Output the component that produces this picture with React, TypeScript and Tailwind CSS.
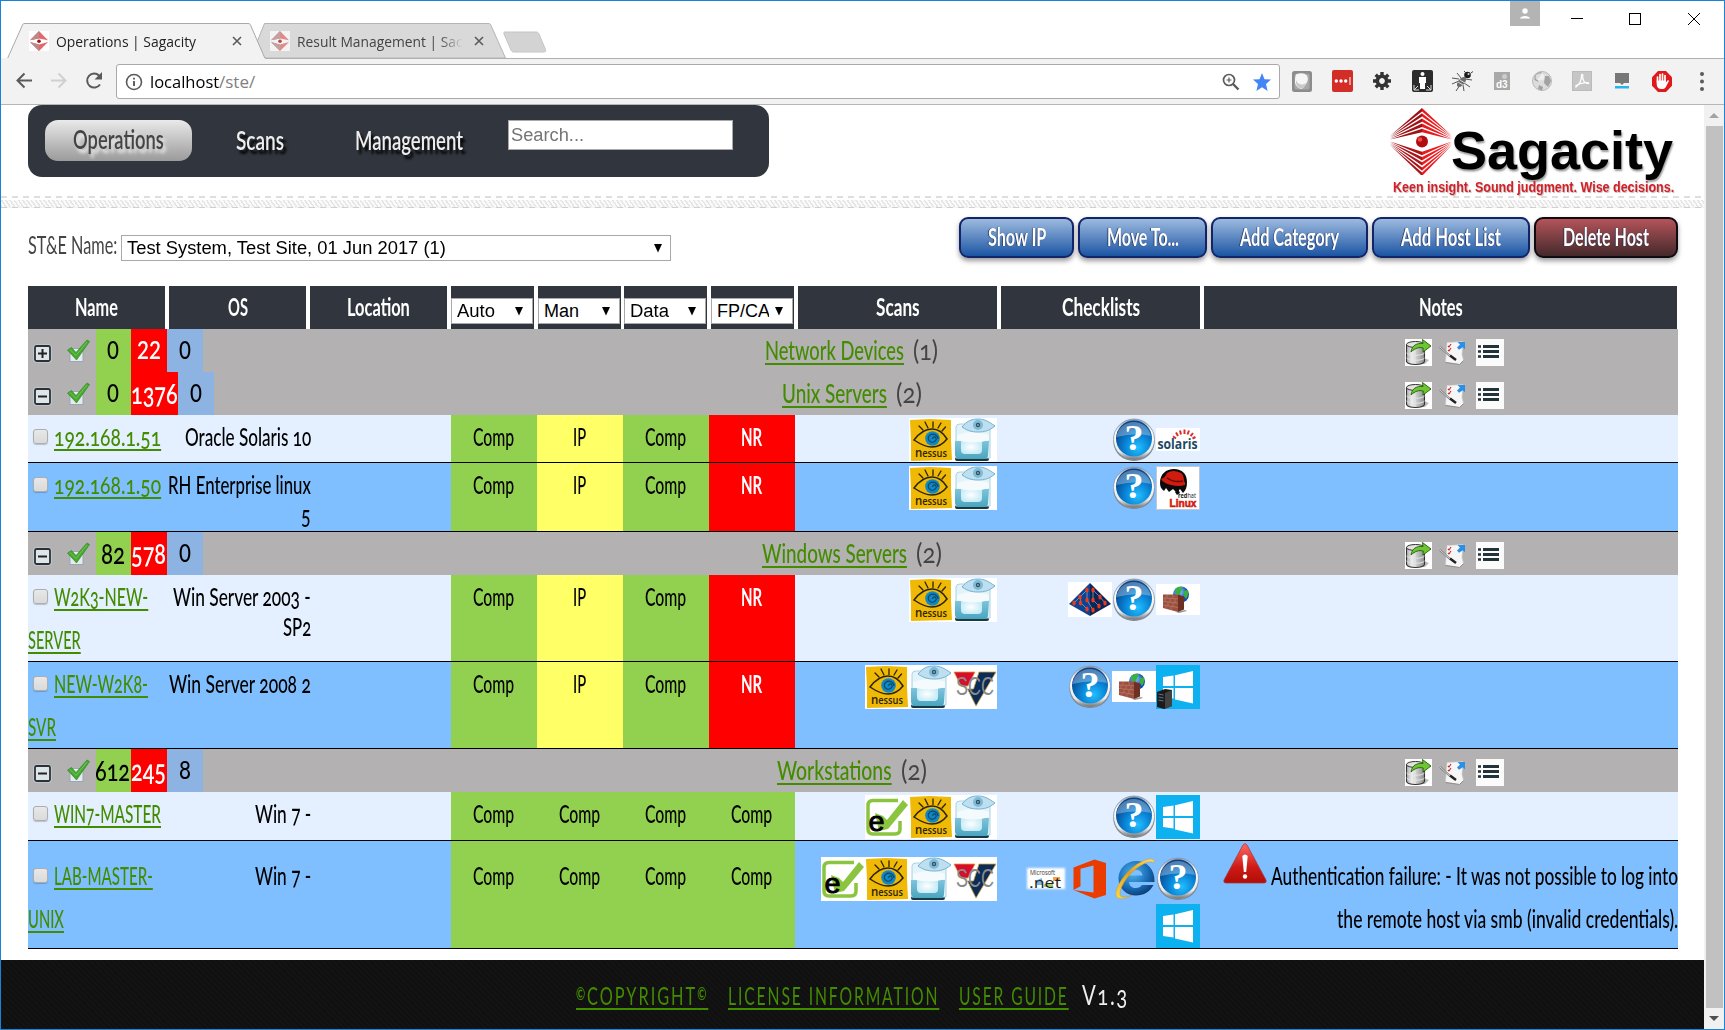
import { useLayoutEffect, useRef, useState } from "react";
import type { ReactNode } from "react";

/* Condensed text: squeezes its content horizontally to a given width. */
function Fit({ w, className = "", children }: { w: number; className?: string; children: ReactNode }) {
  const ref = useRef<HTMLSpanElement>(null);
  const [scale, setScale] = useState(1);
  useLayoutEffect(() => {
    if (ref.current) {
      const natural = ref.current.offsetWidth;
      if (natural) setScale(w / natural);
    }
  }, [w]);
  return (
    <span className="inline-block shrink-0 text-left whitespace-nowrap" style={{ width: w }}>
      <span ref={ref} className={`inline-block origin-left whitespace-pre ${className}`} style={{ transform: `scaleX(${scale})` }}>
        {children}
      </span>
    </span>
  );
}

const LINK = "text-[#438c00] underline decoration-2 underline-offset-[3px] [text-decoration-skip-ink:none]";

/* ---------- browser chrome ---------- */

function Diamond({ size, faded }: { size: number; faded?: boolean }) {
  return (
    <svg width={size} height={size} viewBox="0 0 20 20" className={faded ? "shrink-0 bg-white opacity-70" : "shrink-0 bg-white"}>
      <path d="M1 9.2 10 0l9 9.2L10 7.6z" fill="#e2696b" />
      <path d="M1 9.2 10 0v7.6z" fill="#b98a8a" />
      <path d="M1 11l9 9 9-9-9 2.4z" fill="#e2696b" />
      <path d="M1 11l9 9v-6.6z" fill="#b98a8a" />
      <circle cx="10" cy="10.2" r="1.8" fill="#a51216" />
    </svg>
  );
}

function CloseX() {
  return (
    <svg width="10" height="10" viewBox="0 0 10 10" stroke="#5a5a5a" strokeWidth="1.6">
      <path d="M1 1l8 8M9 1 1 9" />
    </svg>
  );
}

function TabStrip() {
  return (
    <div className="relative flex h-[57px] shrink-0 items-start bg-white">
      <svg width="560" height="57" viewBox="1 1 560 57" className="absolute left-0 top-0">
        <path d="M257 42 264.500 23.500H488c2 0 2.500.5 3 2L505.500 58H264z" fill="#d9d9d9" stroke="#b4b4b4" />
        <path d="M505 32h31c2 0 2.500 1 3 2l6.500 15.500c.6 1.500 0 2.500-1.500 2.500h-30c-2 0-2.500-1-3-2l-7-16c-.5-1.300 0-2 1-2z" fill="#d3d3d3" stroke="#c4c4c4" />
        <path d="M0 58.500H7.500L22.500 25c.6-1.200 1-1.500 2.500-1.500h223c1.500 0 2 .5 2.500 1.500L265 58.500" fill="#f2f2f2" stroke="#a9a9a9" />
      </svg>
      <div className="relative ml-7 mt-[28px] flex h-6 w-[220px] items-center">
        <Diamond size={20} />
        <Fit w={140} className="ml-[7px] font-['Open_Sans',sans-serif] text-[14px] leading-[22px] text-[#222]">Operations | Sagacity</Fit>
        <div className="ml-auto mr-[7px] pl-1"><CloseX /></div>
      </div>
      <div className="relative ml-[21px] mt-[28px] flex h-6 w-[220px] items-center">
        <Diamond size={20} faded />
        <span className="relative ml-[7px] block w-[166px] overflow-hidden">
          <Fit w={166} className="font-['Open_Sans',sans-serif] text-[14px] leading-[22px] text-[#444]">Result Management | Sac</Fit>
          <span className="absolute inset-y-0 right-0 w-6 bg-gradient-to-r from-transparent to-[#d9d9d9]" />
        </span>
        <div className="ml-auto mr-[6px]"><CloseX /></div>
      </div>
      <div className="ml-auto mr-[23px] flex">
        <div className="mr-[31px] flex h-[25px] w-[30px] justify-center bg-[#b4b4b4] pt-[7px]">
          <svg width="10" height="11" viewBox="0 0 10 11" fill="#fff"><circle cx="5" cy="3" r="2.700" /><path d="M0 10.500C0 7 10 7 10 10.500z" /></svg>
        </div>
        <svg width="130" height="25" viewBox="0 0 130 25" fill="none" stroke="#000" shapeRendering="crispEdges">
          <path d="M0 17.500h12" /><path d="M58.500 12.500h11v11h-11z" />
          <path d="M117 12l12 12M129 12l-12 12" shapeRendering="auto" />
        </svg>
      </div>
    </div>
  );
}

function Extensions() {
  const cell = "flex w-10 shrink-0 justify-center";
  return (
    <div className="ml-[2px] flex items-center">
      <div className={cell}><svg width="20" height="21" viewBox="0 0 20 21"><rect width="20" height="21" rx="2.500" fill="#8c8c8c" /><rect x="2.500" y="2.500" width="15" height="16" rx="2" fill="#a8a8a8" /><path d="M4 3.500q7-3 11 1 2 4-1 8.500-3 5-5 5-5-2-6-6-.5-5 1-8.500z" fill="#f6f6f6" /><path d="M4 9c2 6 8 5 10 3-2 5-4 6-6 5.500C5 16 3.500 13 4 9z" fill="#c9c9c9" /></svg></div>
      <div className={cell}><svg width="21" height="22" viewBox="0 0 21 22"><rect width="21" height="22" rx="2" fill="#d32d27" /><g fill="#fff"><circle cx="4.300" cy="11" r="1.700" /><circle cx="9" cy="11" r="1.700" /><circle cx="13.700" cy="11" r="1.700" /><path d="M17.500 7h1v8h-1z" /></g></svg></div>
      <div className={cell}><svg width="18" height="18" viewBox="-9 -9 18 18"><circle r="4.700" fill="none" stroke="#333" strokeWidth="3.600" /><path d="M0-9v3M0 6v3M-9 0h3M6 0h3M-6.300-6.300l2.200 2.200M4.100 4.100l2.200 2.200M6.300-6.300 4.100-4.100M-4.100 4.100l-2.200 2.200" stroke="#333" strokeWidth="3.400" /></svg></div>
      <div className={cell}><svg width="21" height="22" viewBox="0 0 21 22"><rect width="21" height="22" rx="2" fill="#2b2b2b" /><circle cx="10.500" cy="4" r="2" fill="#fff" /><path d="M7 7h7v6h-1v6H8v-6H7z" fill="#fff" /><path d="M2 15v5h5M2 20l4-4M19 15v5h-5M19 20l-4-4" stroke="#ddd" fill="none" /></svg></div>
      <div className={cell}><svg width="22" height="22" viewBox="0 0 22 22"><path d="M8 9 1 8M8 11l-7 3M9 15l-4 6M13 13l6 4M12 15l1 6M10 8 6 3M14 9l7 1" stroke="#555" strokeWidth="1" fill="none" /><ellipse cx="10.500" cy="12" rx="3.200" ry="6" transform="rotate(40 10.500 12)" fill="#6d6d6d" /><path d="M7 12l5 3M9 10l5 3" stroke="#ddd" /><circle cx="16.500" cy="5" r="3.300" fill="#1d1d1d" /><path d="M13 1l2 2M20 3l2-1.500" stroke="#444" /><circle cx="17.500" cy="4" r="1" fill="#ddd" /></svg></div>
      <div className={cell}><div className="relative h-[18px] w-4 bg-[#a9a9a9]"><span className="absolute bottom-0 left-[2px] font-['Liberation_Sans',sans-serif] text-[10px] font-bold leading-[10px] text-white">d3</span><span className="absolute right-[3px] top-[2px] size-[5px] rounded-full bg-[#ccc]" /></div></div>
      <div className={cell}><svg width="20" height="20" viewBox="0 0 20 20"><circle cx="10" cy="10" r="9.500" fill="#dcdcdc" stroke="#b9b9b9" /><path d="M2.500 5q3-4 7-4l-1 4-3 3 1 3-4-2zM13 5l4 0 2 5-3 6-4-4zM7 14l4 2-1 3.500-4-1.500z" fill="#a2a2a2" /><ellipse cx="8" cy="6" rx="4.500" ry="3.500" fill="#f6f6f6" opacity=".7" /></svg></div>
      <div className={cell}><svg width="20" height="20" viewBox="0 0 20 20"><rect width="20" height="20" fill="#bbb" /><rect x="1" y="1" width="18" height="18" fill="#c6c6c6" /><path d="M4 16c3-2 6-7 5.500-12 0-1 1.500-1 1.300.5C10 9 13 13 16.500 12.500 18 11 10 11 4 14.500z" stroke="#fff" fill="none" strokeWidth="1.200" /></svg></div>
      <div className={cell}><svg width="14" height="16" viewBox="0 0 14 16"><path d="M0 0h14v10H9l-2 2-2-2H0z" fill="#777" /><path d="M0 13h14v2.500H0z" fill="#28b4ea" /></svg></div>
      <div className={cell}><svg width="20" height="21" viewBox="0 0 20 21"><path d="M6 0h8l6 6.200v8.600L14 21H6l-6-6.200V6.200z" fill="#e0191b" /><path d="M5.500 11V6M8 10V3.500M10.500 10V3M13 10V4.500" stroke="#fff" strokeWidth="1.700" strokeLinecap="round" /><path d="M4.700 9.500h9.200v2l2-2.500 1.200.7-3 5.800c-1 2-2 2.500-4.500 2.500-3.300 0-4.900-2-4.900-5z" fill="#fff" /></svg></div>
      <div className={cell}><svg width="4" height="19" viewBox="0 0 4 19" fill="#5a5a5a"><circle cx="2" cy="2" r="2" /><circle cx="2" cy="9.500" r="2" /><circle cx="2" cy="17" r="2" /></svg></div>
    </div>
  );
}

function Toolbar() {
  return (
    <div className="relative flex h-[47px] shrink-0 items-center border-b border-[#b6b6b6] bg-[#f2f2f2]">
      <div className="absolute left-[264px] right-0 top-0 h-px bg-[#b0b0b0]" />
      <svg width="92" height="20" viewBox="0 0 92 20" className="ml-[14px]" fill="none" strokeWidth="2">
        <path d="M17 9.500H2.500M9.500 2.500l-7 7 7 7" stroke="#5a5a5a" />
        <path d="M36 9.500h14.500M43.500 2.500l7 7-7 7" stroke="#d0d0d0" />
        <path d="M85 13.500a7 7 0 1 1-.8-8.800" stroke="#5a5a5a" />
        <path d="M87 1v7.500H79.500z" fill="#5a5a5a" />
      </svg>
      <div className="ml-[9px] mt-[1px] flex h-[35px] w-[1164px] items-center rounded-[3px] border border-[#a9a9a9] bg-white">
        <svg width="18" height="18" viewBox="0 0 18 18" className="ml-[8px]" fill="none" stroke="#5a5a5a" strokeWidth="1.600"><circle cx="9" cy="9" r="7.500" /><path d="M9 8v5M9 4.800v1.700" strokeWidth="1.900" /></svg>
        <Fit w={69} className="ml-[7px] font-['Open_Sans',sans-serif] text-[17px] leading-8 text-black">localhost</Fit>
        <Fit w={36} className="ml-[7px] font-['Open_Sans',sans-serif] text-[17px] leading-8 text-[#808080]">/ste/</Fit>
        <svg width="18" height="18" viewBox="0 0 18 18" className="ml-auto" fill="none" stroke="#5a5a5a" strokeWidth="1.700"><circle cx="7" cy="7" r="5.500" /><path d="M11 11l5.500 5.500" strokeWidth="2.400" /><path d="M7 4.500v5M4.500 7h5" strokeWidth="1.200" /></svg>
        <svg width="18" height="18" viewBox="0 0 18 18" className="ml-[13px] mr-[8px]"><path d="M9 0l2.500 6.200 6.500.4-5 4.300L14.600 18 9 14.200 3.400 18 5 10.900 0 6.600l6.500-.4z" fill="#4285f4" /></svg>
      </div>
      <Extensions />
    </div>
  );
}

/* ---------- page header ---------- */

function SagacityMark() {
  const rays = [0, 1, 2, 3, 4];
  return (
    <svg width="64" height="68" viewBox="0 0 64 68" className="shrink-0">
      {rays.map((i) => (
        <g key={i}>
          <path d={`M32 ${1 + i * 5.2}L0 ${29 + i * 0.9}L32 ${4.4 + i * 5.2}z`} fill="#9c1216" />
          <path d={`M32 ${1 + i * 5.2}L62 ${29 + i * 0.9}L32 ${4.4 + i * 5.2}z`} fill="#e8191c" />
          <path d={`M32 ${69 - i * 5.2}L0 ${38 - i * 0.9}L32 ${65.6 - i * 5.2}z`} fill="#a81519" />
          <path d={`M32 ${69 - i * 5.2}L62 ${38 - i * 0.9}L32 ${65.6 - i * 5.2}z`} fill="#ea1c1f" />
        </g>
      ))}
      <circle cx="32" cy="34.500" r="6" fill="#b00d10" />
      <circle cx="30" cy="32.500" r="2.300" fill="#f0494c" />
    </svg>
  );
}

function Header() {
  const nav = "font-['Lato',sans-serif] text-[27px] font-semibold";
  return (
    <div className="flex h-[91px] items-start justify-between pl-[27px] pr-[29px]">
      <div className="flex h-[72px] w-[741px] items-start rounded-[14px] bg-[#31353d] pl-[17px] pt-[15px]">
        <div className="flex h-[41px] w-[147px] items-center justify-center rounded-[13px] bg-gradient-to-b from-[#eaeaea] to-[#9b9b9b] leading-[40px]">
          <Fit w={91} className={`${nav} font-medium text-[#444] [text-shadow:4px_4px_4px_#eee]`}>Operations</Fit>
        </div>
        <div className="ml-[44px] leading-[40px]"><Fit w={48} className={`${nav} text-[#eee] [text-shadow:4px_4px_3px_#000]`}>Scans</Fit></div>
        <div className="ml-[71px] leading-[40px]"><Fit w={108} className={`${nav} text-[#eee] [text-shadow:4px_4px_3px_#000]`}>Management</Fit></div>
        <div className="ml-[45px] h-[30px] w-[225px] border border-[#a9a9a9] bg-white pl-[2px] font-['Liberation_Sans',sans-serif] leading-[28px] text-[#757575]">
          <Fit w={73} className="text-[18px]">Search...</Fit>
        </div>
      </div>
      <div className="flex w-[285px] flex-col">
        <div className="flex h-[70px] items-start pt-[2px]">
          <SagacityMark />
          <div className="-ml-[3px] mt-[5px] leading-[76px]">
            <Fit w={222} className="font-['Liberation_Sans',sans-serif] text-[54px] font-bold text-black [text-shadow:1px_2px_2px_#0006]">Sagacity</Fit>
          </div>
        </div>
        <div className="ml-[3px] h-[18px] leading-[22px]">
          <Fit w={281} className="font-['Liberation_Sans',sans-serif] text-[14.500px] font-bold text-[#d41f26] [text-shadow:1px_1px_1px_#0004]">Keen insight. Sound judgment. Wise decisions.</Fit>
        </div>
      </div>
    </div>
  );
}

function Divider() {
  return (
    <div className="h-[12px]">
      <div className="h-[2px] bg-[repeating-linear-gradient(90deg,#dedede_0_6px,#fff_6px_11px)]" />
      <div className="mt-[2px] h-[7px] bg-[repeating-linear-gradient(55deg,#e6e6e6_0_1.500px,#fafafa_1.500px_3.500px)]" />
      <div className="h-px bg-[repeating-linear-gradient(90deg,#cfcfcf_0_6px,#f2f2f2_6px_11px)]" />
    </div>
  );
}

function Arrow() {
  return <svg width="8" height="9" viewBox="0 0 9 9" preserveAspectRatio="none" className="shrink-0"><path d="M0 0h9L4.500 8.500z" fill="#000" /></svg>;
}

function ActionButton({ label, w, tw, danger }: { label: string; w: number; tw: number; danger?: boolean }) {
  return (
    <div
      className={
        danger
          ? "flex h-[41px] items-center justify-center rounded-[9px] border-2 border-[#100a12] bg-gradient-to-b from-[#b5545a] to-[#45292b] shadow-[0_3px_5px_#0006] leading-[38px]"
          : "flex h-[41px] items-center justify-center rounded-[9px] border-2 border-[#12246a] bg-gradient-to-b from-[#9dbade] to-[#1955a3] shadow-[0_3px_5px_#0006] leading-[38px]"
      }
      style={{ width: w }}
    >
      <Fit w={tw} className="font-['Lato',sans-serif] text-[25px] font-bold text-white [text-shadow:-1px_0_1px_#1a2a50]">{label}</Fit>
    </div>
  );
}

function Controls() {
  return (
    <div className="flex h-[78px] items-start pl-[27px] pt-[9px]">
      <div className="mt-[6px] font-['Lato',sans-serif] leading-[42px]"><Fit w={89} className="text-[25px] text-[#444]">ST&amp;E Name:</Fit></div>
      <div className="ml-[4px] mt-[18px] flex h-[26px] w-[550px] items-center border border-[#a9a9a9] bg-white pl-[5px] pr-[8px] font-['Liberation_Sans',sans-serif] leading-[28px]">
        <Fit w={319} className="text-[18px] text-black">Test System, Test Site, 01 Jun 2017 (1)</Fit>
        <div className="ml-auto"><Arrow /></div>
      </div>
      <div className="ml-auto mr-[26px] flex gap-[4px]">
        <ActionButton label="Show IP" w={115} tw={58} />
        <ActionButton label="Move To..." w={129} tw={72} />
        <ActionButton label="Add Category" w={157} tw={99} />
        <ActionButton label="Add Host List" w={158} tw={100} />
        <ActionButton label="Delete Host" w={144} tw={86} danger />
      </div>
    </div>
  );
}

/* ---------- product icons ---------- */

function Nessus() {
  return (
    <svg width="44" height="44" viewBox="0 0 44 44" className="bg-white">
      <path d="M1 2l20-1 21 1v20l1 20-21 .5L2 43V23z" fill="#efb906" />
      <g fill="none" stroke="#2b2307" strokeLinecap="round">
        <path d="M5 22c6-8 13-11 18-11 7 0 12 5 15 10-4 5-9 8-15 8-7 0-12-3-18-7z" strokeWidth="1.500" />
        <path d="M14 12l-4-4M19 10l-3-6M24 9.500V4M29 10l3-5M33 13l3.500-4" strokeWidth="1.300" />
      </g>
      <circle cx="23.500" cy="20.500" r="7.300" fill="#0e87c6" />
      <path d="M24 21c-1-2 2-3 3-1s-2 5-5 4-4-5-1-7 8 0 8 4" fill="none" stroke="#10435f" strokeWidth="1.100" />
      <text x="6" y="38.500" textLength="32" lengthAdjust="spacingAndGlyphs" fontFamily="Open Sans" fontSize="10.500" fontWeight="600" fill="#2b2307"><tspan fontSize="13">n</tspan>essus</text>
    </svg>
  );
}

function EyeBox() {
  return (
    <svg width="44" height="44" viewBox="0 0 44 44" className="bg-white">
      <defs>
        <linearGradient id="boxBase" x1="0" y1="0" x2="0" y2="1"><stop offset="0" stopColor="#7fc4dc" /><stop offset="1" stopColor="#4aa5bf" /></linearGradient>
        <radialGradient id="boxGlow"><stop offset="0" stopColor="#fff" /><stop offset="1" stopColor="#fff" stopOpacity="0" /></radialGradient>
      </defs>
      <rect x="2" y="39" width="34" height="4" rx="2" fill="#183a44" />
      <path d="M3 9q0-3 4-3h26q4 0 4 4v30H3z" fill="#e3f3fa" stroke="#a9d3e6" />
      <path d="M2 23h34l-1 14q0 4-4 4H7q-4 0-5-4z" fill="url(#boxBase)" />
      <path d="M8 23h21v9q0 4-4 4H12q-4 0-4-4z" fill="#c8ecf6" />
      <ellipse cx="18" cy="29" rx="11" ry="7" fill="url(#boxGlow)" />
      <path d="M4 17q16-6 32 0v5q-16 5-32 0z" fill="#f5fbfd" />
      <path d="M9 9c5-6 9-8 16-8s11 3 17 7c-6 5-11 6-17 6S15 13 9 9z" fill="#bddff0" stroke="#72b3d3" />
      <circle cx="25" cy="7" r="5" fill="#82b9d4" /><circle cx="25" cy="7" r="2.200" fill="#2c5166" /><circle cx="25" cy="7" r=".8" fill="#bfe3f2" />
    </svg>
  );
}

function Scc() {
  return (
    <svg width="44" height="44" viewBox="0 0 44 44" className="bg-white">
      <path d="M1 7h21l-7 14h-7z" fill="#d90d2b" stroke="#d9a13a" strokeWidth=".8" />
      <path d="M26 7h17L23 41 14.500 24h6z" fill="#0b2c57" stroke="#d9a13a" strokeWidth=".8" />
      <text x="3" y="30" textLength="38" lengthAdjust="spacingAndGlyphs" fontFamily="Liberation Sans" fontSize="26" fill="#8a8a8a">SCC</text>
    </svg>
  );
}

function ECheck() {
  return (
    <svg width="44" height="44" viewBox="0 0 44 44" className="bg-white">
      <path d="M33 5.500H8q-5 0-5 5V34q0 5 5 5h22q5 0 5-5v-8" fill="none" stroke="#8bc53f" strokeWidth="3.500" />
      <path d="M10 18l8 3 4 4L38 5l5 5-20 24-9 2z" fill="#8bc53f" />
      <text x="3.500" y="36" textLength="16" lengthAdjust="spacingAndGlyphs" fontFamily="Liberation Sans" fontSize="28" stroke="#000" strokeWidth=".9" fill="#000">e</text>
    </svg>
  );
}

function Question() {
  return (
    <svg width="44" height="44" viewBox="0 0 44 44">
      <defs>
        <radialGradient id="qBlue" cx=".6" cy=".75" r=".75"><stop offset="0" stopColor="#22c0ff" /><stop offset=".45" stopColor="#0a86d8" /><stop offset="1" stopColor="#063f86" /></radialGradient>
        <linearGradient id="qRim" x1="0" y1="0" x2="0" y2="1"><stop offset="0" stopColor="#8d9aa8" /><stop offset=".3" stopColor="#fff" /><stop offset=".8" stopColor="#e8eaec" /><stop offset="1" stopColor="#6d6d6d" /></linearGradient>
      </defs>
      <ellipse cx="22" cy="24" rx="20.500" ry="19" fill="#7b7f84" />
      <circle cx="22" cy="21.500" r="20.500" fill="url(#qRim)" stroke="#8a97a5" strokeWidth=".8" />
      <circle cx="22" cy="20.500" r="18" fill="url(#qBlue)" />
      <path d="M4.500 19a17.500 17.500 0 0 1 34.500-1q-15-4-34.500 1z" fill="#fff" opacity=".3" />
      <text x="12.500" y="32" textLength="19" lengthAdjust="spacingAndGlyphs" fontFamily="Liberation Serif" fontSize="35" fontWeight="700" fill="#fff">?</text>
    </svg>
  );
}

function Solaris() {
  return (
    <svg width="44" height="23" viewBox="0 0 44 23" className="mt-[10px] bg-white">
      <path d="M20 10.500l-3-2.200M22 8l-2-3.500M25 6.500l-1-4M28.500 6V1.500M31.500 6.500l1.500-4M34.500 8.200l2.500-3M36.500 10.500l3-1.500" stroke="#d9302c" strokeWidth="2" />
      <text x="1.500" y="21" textLength="40" lengthAdjust="spacingAndGlyphs" fontFamily="Open Sans" fontSize="13.500" fontWeight="700" fill="#1c4a66">solaris</text>
    </svg>
  );
}

function RedHat() {
  return (
    <svg width="44" height="44" viewBox="0 0 44 44" className="bg-white">
      <rect x=".5" y=".5" width="43" height="43" fill="none" stroke="#bfcad4" />
      <path d="M4 17C4 8 10 3 18 3s13 5 13 13c0 5-1 8-4 11l-3-4-3 4-4-4-4 3-3-4-2 3c-3-2-4-5-4-8z" fill="#0a0a0a" />
      <path d="M5 13q4-1 6-6 6-4 14 0 3 2 3 8 2 2 1 4-6 2-14 0T5 13z" fill="#d11b0f" />
      <path d="M11 12q7 5 16 3" stroke="#5e0b06" strokeWidth="1.500" fill="none" />
      <path d="M19 26l3-3 2 4-3 2z" fill="#0a0a0a" />
      <text x="22" y="32" textLength="18" lengthAdjust="spacingAndGlyphs" fontFamily="Open Sans" fontSize="6.500" fontWeight="700" fill="#222">red<tspan fontWeight="400">hat</tspan></text>
      <text x="13.500" y="40.500" textLength="27" lengthAdjust="spacingAndGlyphs" fontFamily="Liberation Sans" fontSize="11" fontWeight="700" fill="#d11b0f" stroke="#d11b0f" strokeWidth=".6">Linux</text>
    </svg>
  );
}

function Pyramid() {
  const dots = [[19, 8], [25, 8], [12, 15], [19, 18], [25, 18], [32, 15], [6, 21], [12.500, 21], [19, 27], [25, 28], [31, 24], [37, 21]];
  return (
    <svg width="44" height="35" viewBox="0 0 44 35" className="mt-[4px] bg-white">
      <path d="M22 1v33L1 22z" fill="#0d4391" /><path d="M22 1l21 21-21 12z" fill="#0b2558" />
      <path d="M19 8l-7 7-6 6M19 8v10M12 15l1 6 6 6M25 8v10l6 6M25 8l7 7 5 6M19 18l6 10" stroke="#7fa9b8" strokeWidth=".8" fill="none" />
      {dots.map(([x, y], i) => <ellipse key={i} cx={x} cy={y} rx="1.700" ry="2.500" fill="#ed3a1c" />)}
    </svg>
  );
}

function Firewall() {
  return (
    <svg width="44" height="31" viewBox="0 0 44 31" className="mt-[6px] bg-white">
      <defs><radialGradient id="globe" cx=".4" cy=".35"><stop offset="0" stopColor="#8fd3ff" /><stop offset="1" stopColor="#1747b4" /></radialGradient></defs>
      <circle cx="25" cy="10.500" r="8" fill="url(#globe)" />
      <path d="M19 5q4-3 8-2l-2 4-1 4-4-1zM28 7l4-1q1 5-2 9l-2-3z" fill="#39b13c" />
      <path d="M20 28l9-2 2 1-8 2z" fill="#999" />
      <path d="M7 10.500h15v17.500l-15-4z" fill="#9c5140" /><path d="M22 10.500l6 2v13l-6 2.500z" fill="#6e3022" />
      <path d="M7 14l15 .8M7 17.500l15 1.500M7 21l15 2.500M11 11v3M17 11v3.500M9 14v3.500M14 14.500V18M19 15v4M12 18v4M17 18.500V23M10 22v3M15 23v3" stroke="#c08371" strokeWidth=".6" />
    </svg>
  );
}

function Windows({ server }: { server?: boolean }) {
  return (
    <svg width="44" height="44" viewBox="0 0 44 44">
      <rect width="44" height="44" fill="#0db1f0" />
      <path d="M7 12l10.500-1.500v10.500H7zM19 10.200 37 6v15H19zM7 23h10.500v10.500L7 32zM19 23h18v15.500L19 34.500z" fill="#fff" />
      {server && (
        <g>
          <path d="M1 27l8-3 7 1v16l-8 3-7-2z" fill="#1b1b1b" /><path d="M9 28l7-3v16l-7 3z" fill="#424242" />
          <path d="M2.500 29l5 1M2.500 32l5 1M2.500 35l5 1" stroke="#5e7687" />
        </g>
      )}
    </svg>
  );
}

function DotNet() {
  return (
    <svg width="44" height="44" viewBox="0 0 44 44">
      <defs><filter id="halo"><feGaussianBlur stdDeviation="1" /></filter></defs>
      <rect x="3" y="11" width="38" height="21" fill="#fff" filter="url(#halo)" />
      <path d="M13 23l5-2v7h-5z" fill="#74b6e8" /><path d="M20 27h9v3h-9z" fill="#9ed06c" /><path d="M29 20h7v4h-7z" fill="#f6a145" />
      <text x="6" y="18" textLength="25" lengthAdjust="spacingAndGlyphs" fontFamily="Open Sans" fontSize="6.500" fill="#333">Microsoft</text>
      <text x="5" y="30.500" textLength="32" lengthAdjust="spacingAndGlyphs" fontFamily="Open Sans" fontSize="15" fill="#222">.net</text>
    </svg>
  );
}

function Office() {
  return (
    <svg width="44" height="44" viewBox="0 0 44 44">
      <path d="M5.500 10.500 26.500 2.500 38 6v32l-11.500 3.500L5.500 33l20 2.500V8.500L12.500 11.800v17.400L5.500 33z" fill="#eb3c00" />
    </svg>
  );
}

function Explorer() {
  return (
    <svg width="44" height="44" viewBox="0 0 44 44">
      <defs>
        <radialGradient id="ieBlue" cx=".4" cy=".35" r=".75"><stop offset="0" stopColor="#4db4ee" /><stop offset=".6" stopColor="#1769b4" /><stop offset="1" stopColor="#08305f" /></radialGradient>
        <linearGradient id="ieGold" x1="0" y1="1" x2="1" y2="0"><stop offset="0" stopColor="#ffd94a" /><stop offset=".5" stopColor="#e0a020" /><stop offset="1" stopColor="#ffe46b" /></linearGradient>
      </defs>
      <path d="M24 4C14 4 6.500 12 6.500 21.500S14 38.500 24 38.500c8 0 14-4 17.500-10.500H30c-1.500 2-3.500 3-6 3-4 0-6.500-2-7-6h25.500C43 12 35 4 24 4zm-7 14.500c1-4 3.500-5.500 7-5.500s6 1.500 6.500 5.500z" fill="url(#ieBlue)" fillRule="evenodd" />
      <path d="M42.500 6c.5-5-6-5-13.500-1C16 11 3 29 4 38c1 6 10 4 16 0-7 3-12 3-12-1 0-8 10-22 20-28C35 4.500 40 3.500 42.500 6z" fill="url(#ieGold)" stroke="#c98d16" strokeWidth=".4" />
    </svg>
  );
}

const ICONS: Record<string, ReactNode> = {
  nessus: <Nessus />, eye: <EyeBox />, scc: <Scc />, echeck: <ECheck />, q: <Question />, solaris: <Solaris />,
  redhat: <RedHat />, pyramid: <Pyramid />, firewall: <Firewall />, win: <Windows />, winserver: <Windows server />,
  net: <DotNet />, office: <Office />, ie: <Explorer />,
};

function IconStrip({ lines, lead }: { lines: string[][]; lead: boolean }) {
  return (
    <div className={lead ? "flex flex-col items-end gap-[3px] pt-[16px]" : "flex flex-col items-end gap-[3px] pt-[3px]"}>
      {lines.map((line, i) => (
        <div key={i} className="flex h-[44px] items-start">
          {line.map((k) => <span key={k} className="block [&>svg]:block">{ICONS[k]}</span>)}
        </div>
      ))}
    </div>
  );
}

/* ---------- table ---------- */

function TableHead() {
  const cell = "flex h-[43px] items-center justify-center bg-[#31353d] font-['Lato',sans-serif] leading-[44px] text-white";
  const bold = "text-[25px] font-bold";
  const selects: [string, number, string][] = [["Auto", 38, "w-[83px]"], ["Man", 35, "w-[83px] ml-[4px]"], ["Data", 39, "w-[83px] ml-[3px]"], ["FP/CA", 53, "w-[83px] ml-[4px]"]];
  return (
    <div className="flex">
      <div className={`${cell} w-[137px]`}><Fit w={43} className={bold}>Name</Fit></div>
      <div className={`${cell} ml-[4px] w-[137px]`}><Fit w={20} className={bold}>OS</Fit></div>
      <div className={`${cell} ml-[4px] mr-[4px] w-[137px]`}><Fit w={63} className={bold}>Location</Fit></div>
      {selects.map(([label, w, size]) => (
        <div key={label} className={`h-[43px] bg-[#31353d] pt-[12px] ${size}`}>
          <div className="flex h-[26px] w-[82px] items-center border border-[#a9a9a9] bg-white pl-[5px] pr-[9px] font-['Liberation_Sans',sans-serif] leading-[24px]">
            <span className="w-[52px] overflow-hidden"><Fit w={w} className="text-[18px] text-black">{label}</Fit></span>
            <div className="ml-auto"><Arrow /></div>
          </div>
        </div>
      ))}
      <div className={`${cell} ml-[4px] w-[199px]`}><Fit w={44} className={bold}>Scans</Fit></div>
      <div className={`${cell} ml-[4px] w-[199px]`}><Fit w={78} className={bold}>Checklists</Fit></div>
      <div className={`${cell} ml-[4px] w-[473px]`}><Fit w={44} className={bold}>Notes</Fit></div>
    </div>
  );
}

function Toggle({ open }: { open: boolean }) {
  return (
    <svg width="19" height="19" viewBox="0 0 19 19" className="ml-[5px] mt-[5px]">
      <rect x=".5" y=".5" width="18" height="18" rx="2.500" fill="#cfd6da" />
      <rect x="2" y="2" width="15" height="15" rx="1.500" fill="#dfe6ea" stroke="#283238" strokeWidth="1.800" />
      <path d={open ? "M5 9.500h9" : "M5 9.500h9M9.500 5v9"} stroke="#222" strokeWidth="2" />
    </svg>
  );
}

function Tick() {
  return (
    <svg width="23" height="24" viewBox="0 0 23 24" className="ml-[15px]">
      <rect x="3" y="9.500" width="13" height="13" fill="#e6ebf2" stroke="#9aa5b5" />
      <path d="M.5 11l4-2.500 4.500 5L20 1l2.500 1.500L9.500 21z" fill="#44a82f" stroke="#3a8a29" strokeWidth=".7" />
      <path d="M3 10.500l6 6L20 3" fill="none" stroke="#74c95a" strokeWidth="1" />
    </svg>
  );
}

function GroupActions() {
  return (
    <div className="flex pl-[129px] pt-[10px]">
      <svg width="27" height="27" viewBox="0 0 27 27" className="bg-white">
        <defs><linearGradient id="drum"><stop offset="0" stopColor="#aaa" /><stop offset=".3" stopColor="#efefef" /><stop offset="1" stopColor="#8d8d8d" /></linearGradient></defs>
        <path d="M19 19l5 2-4 4h-3z" fill="#bbb" />
        <path d="M1.500 5.500v17c2 4 16 4 18 0v-17z" fill="url(#drum)" stroke="#333" strokeWidth="1.100" />
        <ellipse cx="10.500" cy="5.500" rx="9" ry="3" fill="#e2e2e2" stroke="#333" />
        <path d="M1.500 14c2 3 16 3 18 0M1.500 19c2 3 16 3 18 0M10 12v13" stroke="#e6e6e6" fill="none" />
        <path d="M6 13C7 6 12 4 18 4.500L17.500.5 26 7l-8 6 .2-4C14 8 10 9 6 13z" fill="#6cc72f" stroke="#245c10" strokeWidth=".9" />
      </svg>
      <svg width="27" height="27" viewBox="0 0 27 27" className="ml-[7px]">
        <path d="M8 3.500l16-1-1 13 1.500 6-4 4-14-2.500z" fill="#f6f6f6" stroke="#ccc" strokeWidth=".6" /><path d="M6.500 23.500l14 2 4-4" fill="none" stroke="#8d8d8d" />
        <path d="M9 7l1 1 2-3M9 11l1 1 2-3" stroke="#c22" fill="none" strokeWidth="1.100" />
        <path d="M1 8l10 9" stroke="#777" strokeWidth="2" /><path d="M1 8l10 9" stroke="#eee" strokeWidth=".8" /><path d="M11 16.500l6 4.500" stroke="#222" strokeWidth="2.500" />
        <path d="M18.500 3h7.500v7.500l-2.200-2.200-3.800 2.500-2-2.300 3-3z" fill="#2b8fe8" />
      </svg>
      <svg width="28" height="27" viewBox="0 0 28 27" className="ml-[10px] bg-[#fbfbfb]">
        <g stroke="#22333b" strokeWidth="2.800"><path d="M7 7.500h16M7 12.500h16M7 17.500h16" /><path d="M2 7.500h3M2 12.500h3M2 17.500h3" strokeWidth="2.500" /></g>
      </svg>
    </div>
  );
}

type Count = [string, number];
const countSize = (t: string) => (/^(0|22|8)$/.test(t) ? "text-[24px] lining-nums" : "text-[29px]");

function Group({ open = true, counts, title, tw, n, nw }: { open?: boolean; counts: Count[]; title: string; tw: number; n: string; nw: number }) {
  const box = "flex justify-center";
  return (
    <div className="flex h-[43px] bg-[#b3b1b1] font-['Lato',sans-serif] leading-[41px]">
      <div className="flex w-[400px]">
        <div className="flex pt-[10px]"><Toggle open={open} /><Tick /></div>
        <div className={`${box} ml-[6px] w-[35px] bg-[#92d050] pr-[2px] text-black`}><Fit w={counts[0][1]} className={`${countSize(counts[0][0])} font-medium`}>{counts[0][0]}</Fit></div>
        <div className={`${box} ${counts[1][1] > 40 ? "w-[47px]" : "w-[36px]"} bg-[#ff0000] pr-[1px] text-white`}><Fit w={counts[1][1]} className={`${countSize(counts[1][0])} font-semibold`}>{counts[1][0]}</Fit></div>
        <div className={`${box} w-[36px] bg-[#8db3e2] pr-[1px] text-black`}><Fit w={counts[2][1]} className={`${countSize(counts[2][0])} font-medium`}>{counts[2][0]}</Fit></div>
      </div>
      <div className="flex w-[848px] justify-center gap-[9px] pr-[1px]">
        <Fit w={tw} className={`text-[27px] font-medium ${LINK}`}>{title}</Fit>
        <Fit w={nw} className="text-[27px] text-[#444]">{n}</Fit>
      </div>
      <GroupActions />
    </div>
  );
}

type Line = [string, number];
interface Host {
  height: string;
  blue?: boolean;
  lead?: boolean;
  name: Line[];
  os: Line[];
  status: string[];
  scans: string[];
  checks: string[][];
  note?: boolean;
}

const STATUS: Record<string, [number, string, string]> = {
  Comp: [41, "bg-[#92d050] text-black", "font-medium"],
  IP: [13, "bg-[#ffff66] text-black", "font-medium"],
  NR: [21, "bg-[#ff0000] text-white", "font-bold"],
};

function HostRow({ h }: { h: Host }) {
  return (
    <div className={`flex border-b border-black font-['Lato',sans-serif] text-[25px] leading-[43px] text-black ${h.height} ${h.blue ? "bg-[#80bfff]" : "bg-[#e4f0ff]"}`}>
      <div className={h.lead ? "w-[141px] pt-[13px]" : "w-[141px]"}>
        {h.name.map(([t, w], i) => (
          <div key={t} className="flex h-[43px]">
            {i === 0 && <span className="ml-[5px] mr-[6px] mt-[14px] size-[15px] shrink-0 rounded-[3px] border border-[#adadad] bg-gradient-to-b from-[#e8e8e8] to-[#dadada] shadow-[0_1px_1px_#0003]" />}
            <Fit w={w} className={`font-medium ${LINK}`}>{t}</Fit>
          </div>
        ))}
      </div>
      <div className={h.lead ? "flex w-[142px] flex-col items-end pt-[19px] leading-[30px]" : "flex w-[142px] flex-col items-end pt-[6px] leading-[30px]"}>
        {h.os.map(([t, w]) => <div key={t} className="h-[30px]"><Fit w={w} className="font-medium">{t}</Fit></div>)}
      </div>
      <div className="w-[140px]" />
      {h.status.map((s, i) => (
        <div key={i} className={`flex w-[86px] justify-center pr-[2px] ${STATUS[s][1]} ${h.lead ? "pt-[13px]" : ""}`}>
          <Fit w={STATUS[s][0]} className={STATUS[s][2]}>{s}</Fit>
        </div>
      ))}
      <div className="w-[202px]"><IconStrip lines={[h.scans]} lead={!!h.lead} /></div>
      <div className="w-[203px]"><IconStrip lines={h.checks} lead={!!h.lead} /></div>
      <div className="flex w-[478px] flex-col items-end">
        {h.note && (
          <>
            <div className="flex h-[56px]">
              <svg width="44" height="42" viewBox="0 0 44 42" className="mr-[4px] mt-[1px]">
                <defs><linearGradient id="warn" x1="0" y1="0" x2="0" y2="1"><stop offset="0" stopColor="#ff6a66" /><stop offset=".6" stopColor="#cf1a14" /><stop offset="1" stopColor="#b00d08" /></linearGradient></defs>
                <path d="M20 3q2-3 4 0l19 35q1 3-2 3H3q-3 0-2-3z" fill="url(#warn)" stroke="#a53a42" strokeWidth=".8" />
                <path d="M19.300 14q2.700-3 5.400 0l-1.500 16h-2.400z" fill="#fff" /><circle cx="22" cy="34.500" r="2.200" fill="#fff" />
              </svg>
              <div className="pt-[13px]"><Fit w={407} className="font-medium">Authentication failure: - It was not possible to log into</Fit></div>
            </div>
            <Fit w={341} className="font-medium">the remote host via smb (invalid credentials).</Fit>
          </>
        )}
      </div>
    </div>
  );
}

const full = ["Comp", "Comp", "Comp", "Comp"];
const partial = ["Comp", "IP", "Comp", "NR"];

const unix: Host[] = [
  { height: "h-[48px]", name: [["192.168.1.51", 107]], os: [["Oracle Solaris 10", 126]], status: partial, scans: ["nessus", "eye"], checks: [["q", "solaris"]] },
  { height: "h-[69px]", blue: true, name: [["192.168.1.50", 107]], os: [["RH Enterprise linux", 143], ["5", 10]], status: partial, scans: ["nessus", "eye"], checks: [["q", "redhat"]] },
];
const windows: Host[] = [
  { height: "h-[87px]", name: [["W2K3-NEW-", 94], ["SERVER", 53]], os: [["Win Server 2003 -", 138], ["SP2", 28]], status: partial, scans: ["nessus", "eye"], checks: [["pyramid", "q", "firewall"]] },
  { height: "h-[87px]", blue: true, name: [["NEW-W2K8-", 94], ["SVR", 28]], os: [["Win Server 2008 2", 142]], status: partial, scans: ["nessus", "eye", "scc"], checks: [["q", "firewall", "winserver"]] },
];
const workstations: Host[] = [
  { height: "h-[49px]", name: [["WIN7-MASTER", 107]], os: [["Win 7 -", 56]], status: full, scans: ["echeck", "nessus", "eye"], checks: [["q", "win"]] },
  { height: "h-[108px]", blue: true, lead: true, name: [["LAB-MASTER-", 99], ["UNIX", 36]], os: [["Win 7 -", 56]], status: full, scans: ["echeck", "nessus", "eye", "scc"], checks: [["net", "office", "ie", "q"], ["win"]], note: true },
];

function HostTable() {
  return (
    <div className="ml-[27px] w-[1650px] oldstyle-nums">
      <TableHead />
      <Group open={false} counts={[["0", 12], ["22", 24], ["0", 12]]} title="Network Devices" tw={139} n="(1)" nw={25} />
      <Group counts={[["0", 12], ["1376", 47], ["0", 12]]} title="Unix Servers" tw={105} n="(2)" nw={26} />
      {unix.map((h) => <HostRow key={h.name[0][0]} h={h} />)}
      <Group counts={[["82", 24], ["578", 35], ["0", 12]]} title="Windows Servers" tw={145} n="(2)" nw={26} />
      {windows.map((h) => <HostRow key={h.name[0][0]} h={h} />)}
      <Group counts={[["612", 35], ["245", 35], ["8", 12]]} title="Workstations" tw={115} n="(2)" nw={26} />
      {workstations.map((h) => <HostRow key={h.name[0][0]} h={h} />)}
    </div>
  );
}

function Footer() {
  const link = `text-[25px] tracking-[3px] ${LINK}`;
  const mark = "align-[5px] text-[17px] leading-none font-bold";
  return (
    <div className="mt-[11px] flex flex-1 bg-[#111] bg-[repeating-linear-gradient(45deg,#101010_0_2px,#131313_2px_4px)] pl-[575px] pt-[14px] font-['Lato',sans-serif] leading-[43px] oldstyle-nums">
      <Fit w={132} className={link}><span className={mark}>©</span>COPYRIGHT<span className={mark}>©</span></Fit>
      <span className="w-[20px]" />
      <Fit w={211} className={link}>LICENSE INFORMATION</Fit>
      <span className="w-[20px]" />
      <Fit w={110} className={link}>USER GUIDE</Fit>
      <span className="w-[13px]" />
      <Fit w={47} className="text-[26px] tracking-[2px] text-[#eee]">V1.3</Fit>
    </div>
  );
}

function Scrollbar() {
  return (
    <div className="flex w-[20px] shrink-0 flex-col bg-[#f1f1f1]">
      <div className="flex h-[21px] items-center justify-center"><svg width="10" height="5" viewBox="0 0 10 5"><path d="M0 5h10L5 0z" fill="#a3a3a3" /></svg></div>
      <div className="ml-[2px] w-[17px] flex-1 bg-[#c1c1c1]" />
      <div className="flex h-[21px] items-center justify-center"><svg width="10" height="5" viewBox="0 0 10 5"><path d="M0 0h10L5 5z" fill="#505050" /></svg></div>
    </div>
  );
}

export default function App() {
  return (
    <div className="flex h-[1030px] w-[1725px] flex-col overflow-hidden border border-[#1883d7] bg-white">
      <TabStrip />
      <Toolbar />
      <div className="flex min-h-0 flex-1">
        <div className="flex w-[1703px] flex-col">
          <Header />
          <Divider />
          <Controls />
          <HostTable />
          <Footer />
        </div>
        <Scrollbar />
      </div>
    </div>
  );
}
